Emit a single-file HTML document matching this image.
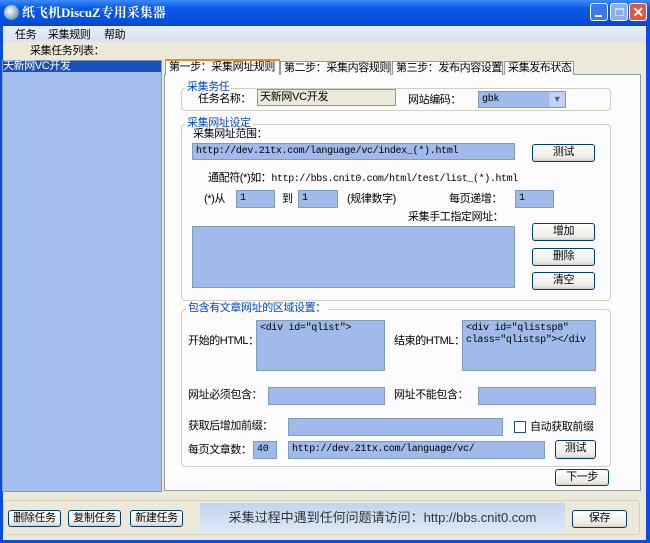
<!DOCTYPE html>
<html><head><meta charset="utf-8"><style>
*{margin:0;padding:0;box-sizing:border-box}
body{width:650px;height:543px;background:#0a4ee0;position:relative;overflow:hidden;font-family:"Liberation Sans","Noto Sans CJK SC",sans-serif;font-size:11px;letter-spacing:-0.4px;color:#000}
.a{position:absolute;white-space:nowrap;line-height:14px}
.win{position:absolute;left:3px;top:26px;width:643px;height:514px;background:#ece9d8}
.title{position:absolute;left:0;top:0;width:650px;height:26px;background:linear-gradient(#3d8cf8,#0a5ae8 30%,#0450dd 80%,#0a45c8)}
.inp{position:absolute;background:#9fbaeb;border:1px solid #7f9db9;font-family:"Liberation Mono","Noto Serif CJK SC",monospace;font-size:10px;letter-spacing:-0.3px;padding:2px 3px;line-height:12px;white-space:nowrap;overflow:hidden}
.btn{position:absolute;background:linear-gradient(#fff,#ecebe6 80%,#d6d0c5);border:1px solid #003c74;border-radius:3px;text-align:center;line-height:15px;white-space:nowrap}
.grp{position:absolute;border:1px solid #d0d0bf;border-radius:4px}
.gl{position:absolute;background:#fcfcfe;color:#0046d5;padding:0 2px;line-height:12px;white-space:nowrap}
.tab{position:absolute;top:61px;height:14px;background:#fcfcfe;border:1px solid #919b9c;border-bottom:none;line-height:12px;padding:0 3px;white-space:nowrap;overflow:hidden}
</style></head><body>
<div class="title"></div>
<div class="a" style="left:4px;top:5px;width:15px;height:15px;border-radius:50%;background:radial-gradient(circle at 40% 40%,#fff,#8ab 60%,#345)"></div>
<div class="a" style="left:22px;top:5px;color:#fff;font-weight:bold;font-size:13px;letter-spacing:0;line-height:16px;font-family:'Liberation Serif','Noto Serif CJK SC',serif">纸飞机DiscuZ专用采集器</div>
<div class="a" style="left:590px;top:3px;width:18px;height:18px;background:#3a7af0;border:1px solid #fff;border-radius:3px"><div style="position:absolute;left:4px;top:11px;width:7px;height:2px;background:#fff"></div></div>
<div class="a" style="left:610px;top:3px;width:18px;height:18px;background:#8aaef0;border:1px solid #fff;border-radius:3px"><div style="position:absolute;left:4px;top:4px;width:9px;height:8px;border:1px solid #cde;border-top-width:2px"></div></div>
<div class="a" style="left:629px;top:3px;width:18px;height:18px;background:#e0583a;border:1px solid #fff;border-radius:3px;color:#fff;font-weight:bold;text-align:center;line-height:16px;font-size:14px">✕</div>
<div class="win">
 <div class="a" style="left:0;top:0;width:643px;height:16px;background:linear-gradient(#e8eef8,#d8e2f2)"></div>
 <div class="a" style="left:12px;top:2px">任务</div>
 <div class="a" style="left:45px;top:2px">采集规则</div>
 <div class="a" style="left:101px;top:2px">帮助</div>
 <div class="a" style="left:27px;top:18px">采集任务列表：</div>
 <div class="a" style="left:-1px;top:34px;width:160px;height:432px;background:#a4bfee;border:1px solid #7f9db9"></div>
 <div class="a" style="left:0;top:35px;width:158px;height:11px;background:#1c4fb8;color:#fff;line-height:11px">天新网VC开发</div>
 <div class="a" style="left:161px;top:48px;width:477px;height:417px;background:#fcfcfe;border:1px solid #919b9c"></div>
</div>
<div class="tab" style="left:165px;top:59px;height:16px;width:115px;border-top:2px solid #e68b2c">第一步：采集网址规则</div>
<div class="tab" style="left:280px;width:111px">第二步：采集内容规则</div>
<div class="tab" style="left:392px;width:111px">第三步：发布内容设置</div>
<div class="tab" style="left:504px;width:70px">采集发布状态</div>

<div class="grp" style="left:181px;top:88px;width:430px;height:23px"></div>
<div class="gl" style="left:185px;top:81px">采集务任</div>
<div class="a" style="left:198px;top:92px">任务名称：</div>
<div class="inp" style="left:257px;top:89px;width:139px;height:17px;background:#ece9d8;font-family:'Liberation Sans','Noto Sans CJK SC',sans-serif;font-size:11px;padding:0 2px;line-height:15px">天新网VC开发</div>
<div class="a" style="left:408px;top:93px">网站编码：</div>
<div class="inp" style="left:478px;top:91px;width:88px;height:17px">gbk</div>
<div class="a" style="left:549px;top:92px;width:16px;height:15px;background:#c1d3fb;border:1px solid #b9cbef;text-align:center;font-size:9px;line-height:13px;color:#4d6185">▼</div>

<div class="grp" style="left:181px;top:124px;width:430px;height:177px"></div>
<div class="gl" style="left:185px;top:117px">采集网址设定</div>
<div class="a" style="left:193px;top:127px">采集网址范围：</div>
<div class="inp" style="left:192px;top:143px;width:323px;height:17px">http://dev.21tx.com/language/vc/index_(*).html</div>
<div class="btn" style="left:532px;top:144px;width:63px;height:18px">测试</div>
<div class="a" style="left:208px;top:171px">通配符(*)如：<span style="font-family:'Liberation Mono',monospace;font-size:10px">http://bbs.cnit0.com/html/test/list_(*).html</span></div>
<div class="a" style="left:204px;top:192px">(*)从</div>
<div class="inp" style="left:236px;top:190px;width:39px;height:18px">1</div>
<div class="a" style="left:282px;top:192px">到</div>
<div class="inp" style="left:298px;top:190px;width:40px;height:18px">1</div>
<div class="a" style="left:347px;top:192px">(规律数字)</div>
<div class="a" style="left:449px;top:192px">每页递增：</div>
<div class="inp" style="left:515px;top:190px;width:39px;height:18px">1</div>
<div class="a" style="left:408px;top:210px">采集手工指定网址：</div>
<div class="inp" style="left:192px;top:226px;width:323px;height:62px"></div>
<div class="btn" style="left:532px;top:223px;width:63px;height:18px">增加</div>
<div class="btn" style="left:532px;top:248px;width:63px;height:18px">删除</div>
<div class="btn" style="left:532px;top:272px;width:63px;height:18px">清空</div>

<div class="grp" style="left:181px;top:309px;width:430px;height:158px"></div>
<div class="gl" style="left:186px;top:302px">包含有文章网址的区域设置：</div>
<div class="a" style="left:188px;top:334px">开始的HTML：</div>
<div class="inp" style="left:256px;top:320px;width:129px;height:51px">&lt;div id="qlist"&gt;</div>
<div class="a" style="left:394px;top:334px">结束的HTML：</div>
<div class="inp" style="left:462px;top:320px;width:134px;height:51px">&lt;div id="qlistsp8"<br>class="qlistsp"&gt;&lt;/div</div>
<div class="a" style="left:188px;top:388px">网址必须包含：</div>
<div class="inp" style="left:268px;top:387px;width:117px;height:18px"></div>
<div class="a" style="left:394px;top:388px">网址不能包含：</div>
<div class="inp" style="left:478px;top:387px;width:118px;height:18px"></div>
<div class="a" style="left:188px;top:419px">获取后增加前缀：</div>
<div class="inp" style="left:288px;top:418px;width:215px;height:18px"></div>
<div class="a" style="left:514px;top:421px;width:12px;height:12px;border:1px solid #1c5180;background:#fff"></div>
<div class="a" style="left:530px;top:420px">自动获取前缀</div>
<div class="a" style="left:188px;top:443px">每页文章数：</div>
<div class="inp" style="left:253px;top:441px;width:24px;height:18px">40</div>
<div class="inp" style="left:288px;top:441px;width:257px;height:18px">http://dev.21tx.com/language/vc/</div>
<div class="btn" style="left:555px;top:440px;width:41px;height:19px">测试</div>
<div class="btn" style="left:555px;top:469px;width:54px;height:17px">下一步</div>

<div class="a" style="left:3px;top:500px;width:637px;height:35px;border:1px solid #d0d0bf;border-radius:3px"></div>
<div class="btn" style="left:8px;top:510px;width:53px;height:17px">删除任务</div>
<div class="btn" style="left:68px;top:510px;width:53px;height:17px">复制任务</div>
<div class="btn" style="left:130px;top:510px;width:53px;height:17px">新建任务</div>
<div class="a" style="left:200px;top:503px;width:365px;height:29px;background:linear-gradient(#c2d4ee,#dde8f6);text-align:center;line-height:29px;font-size:13px;letter-spacing:0;color:#333">采集过程中遇到任何问题请访问：http://bbs.cnit0.com</div>
<div class="btn" style="left:572px;top:510px;width:55px;height:18px">保存</div>
</body></html>
